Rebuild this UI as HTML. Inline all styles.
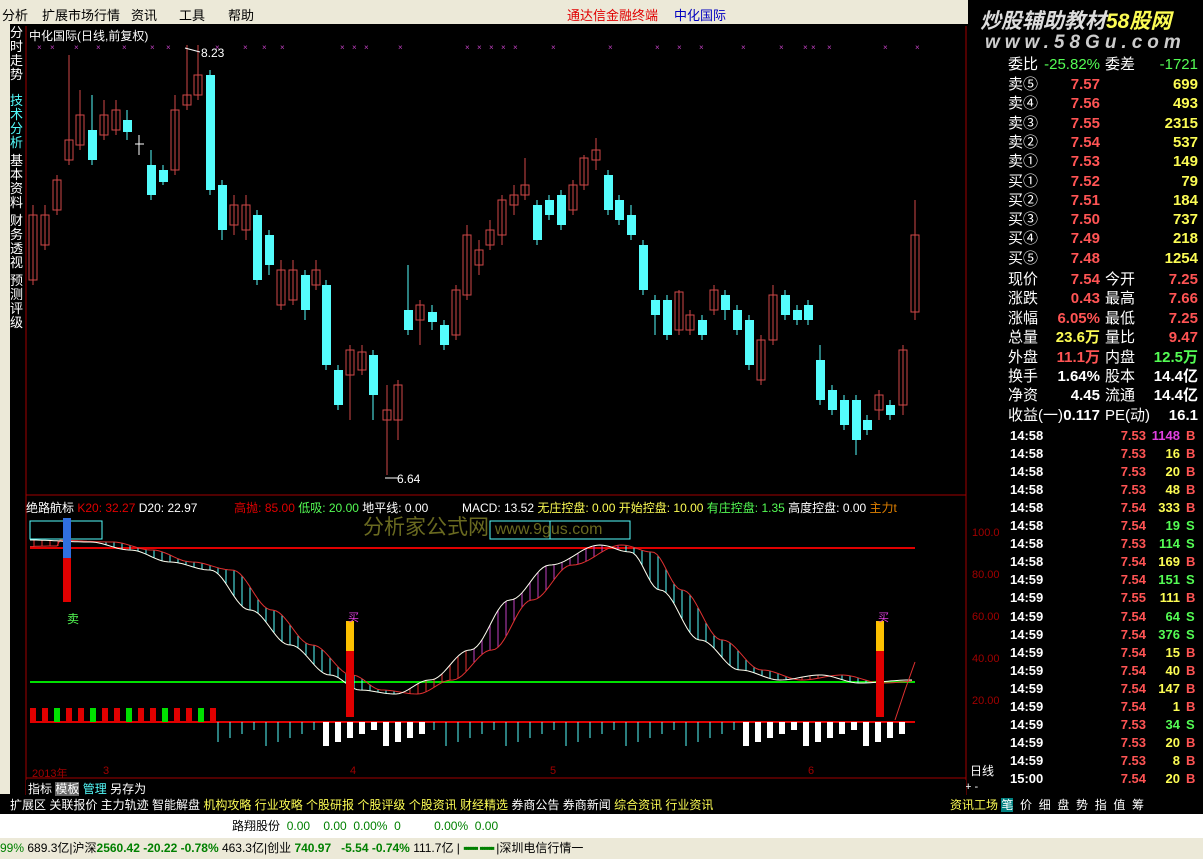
<!DOCTYPE html><html><head><meta charset="utf-8"><style>
*{margin:0;padding:0;box-sizing:border-box}
body{width:1203px;height:859px;overflow:hidden;background:#000;font-family:"Liberation Sans","Noto Sans CJK SC",sans-serif;font-size:12px;position:relative}
.a{position:absolute;white-space:nowrap}
#menu{left:0;top:0;width:1203px;height:24px;background:#ece9d8;color:#000;font-size:13px}
#menu span{position:absolute;top:5px}
.rp div{position:absolute;font-size:15px;white-space:nowrap;height:19px;line-height:19px}
.w{color:#fff}.r{color:#ff5454}.g{color:#54fc54}.y{color:#fcfc54}.m{color:#e040e0}
</style></head><body>
<div class="a" id="menu"><span style="left:2px">分析</span><span style="left:42px">扩展市场行情</span><span style="left:131px">资讯</span><span style="left:179px">工具</span><span style="left:228px">帮助</span><span style="left:567px;color:#e00000">通达信金融终端</span><span style="left:674px;color:#0000c0">中化国际</span></div>
<div class="a" style="left:0;top:24px;width:10px;height:770px;background:#ece9d8"></div>
<div class="a" style="left:10px;top:26px;width:16px;color:#fff;font-size:13px;line-height:14px;white-space:normal">分时走势</div>
<div class="a" style="left:10px;top:94px;width:16px;color:#54fcfc;font-size:13px;line-height:14px;white-space:normal">技术分析</div>
<div class="a" style="left:10px;top:154px;width:16px;color:#fff;font-size:13px;line-height:14px;white-space:normal">基本资料</div>
<div class="a" style="left:10px;top:214px;width:16px;color:#fff;font-size:13px;line-height:14px;white-space:normal">财务透视</div>
<div class="a" style="left:10px;top:274px;width:16px;color:#fff;font-size:13px;line-height:14px;white-space:normal">预测评级</div>
<div class="a" style="left:29px;top:27px;color:#fff;font-size:12px">中化国际(日线,前复权)</div>
<div class="a" style="left:201px;top:46px;color:#fff;font-size:12px">8.23</div>
<div class="a" style="left:397px;top:472px;color:#fff;font-size:12px">6.64</div>
<svg class="a" style="left:0;top:0" width="1203" height="859" id="sv"></svg>
<div class="a" style="left:26px;top:499px;font-size:12px"><span class="w">绝路航标</span> <span style="color:#e00000">K20: 32.27</span> <span class="w">D20: 22.97</span>&nbsp;&nbsp;&nbsp;&nbsp;&nbsp;&nbsp;&nbsp;&nbsp;&nbsp;&nbsp;&nbsp;<span style="color:#e00000">高抛: 85.00</span> <span class="g">低吸: 20.00</span> <span class="w">地平线: 0.00</span></div>
<div class="a" style="left:462px;top:499px;font-size:12px"><span class="w">MACD: 13.52</span> <span class="y">无庄控盘: 0.00</span> <span class="y">开始控盘: 10.00</span> <span class="g">有庄控盘: 1.35</span> <span class="w">高度控盘: 0.00</span> <span style="color:#e08000">主力t</span></div>
<div class="a" style="left:363px;top:511px;color:#6a6a20;font-size:21px">分析家公式网 <span style="font-size:16px">www.9gus.com</span></div>
<div class="a" style="left:67px;top:610px;color:#54fc54;font-size:12px">卖</div>
<div class="a" style="left:348px;top:609px;color:#e040e0;font-size:11px">买</div>
<div class="a" style="left:878px;top:609px;color:#e040e0;font-size:11px">买</div>
<div class="a" style="left:32px;top:765px;color:#a00000;font-size:11px">2013年</div>
<div class="a" style="left:103px;top:765px;color:#a00000;font-size:11px">3</div>
<div class="a" style="left:350px;top:765px;color:#a00000;font-size:11px">4</div>
<div class="a" style="left:550px;top:765px;color:#a00000;font-size:11px">5</div>
<div class="a" style="left:808px;top:765px;color:#a00000;font-size:11px">6</div>
<div class="a" style="left:972px;top:512px;color:#a00000;font-size:11px;line-height:42px">100.0<br>80.00<br>60.00<br>40.00<br>20.00</div>
<div class="a" style="left:970px;top:762px;color:#fff;font-size:12px">日线</div>
<div class="a" style="left:965px;top:781px;color:#fff;font-size:11px">+ -</div>
<div class="a" style="left:26px;top:780px;width:940px;height:16px;background:#000;color:#fff;font-size:12px"><span style="margin-left:2px">指标</span> <span style="background:#666">模板</span> <span style="color:#54fcfc">管理</span> 另存为</div>
<div class="a" style="left:10px;top:796px;width:968px;height:18px;background:#000;font-size:12px;line-height:18px"><span class="w">扩展区 关联报价 主力轨迹 智能解盘</span> <span class="y">机构攻略 行业攻略 个股研报 个股评级 个股资讯 财经精选</span> <span class="w">券商公告 券商新闻</span> <span class="y">综合资讯 行业资讯</span></div>
<div class="a" style="left:950px;top:796px;width:253px;height:18px;background:#000;font-size:12px;line-height:18px;color:#fff"><span class="y">资讯工场</span> <span style="background:#008080">笔</span>&nbsp; 价 &nbsp;细 &nbsp;盘 &nbsp;势 &nbsp;指 &nbsp;值 &nbsp;筹</div>
<div class="a" style="left:0;top:814px;width:1203px;height:24px;background:#fff;font-size:12px;line-height:24px"><span style="margin-left:232px">路翔股份</span>&nbsp;&nbsp;<span style="color:#008000">0.00&nbsp;&nbsp;&nbsp;&nbsp;0.00&nbsp;&nbsp;0.00%&nbsp;&nbsp;0&nbsp;&nbsp;&nbsp;&nbsp;&nbsp;&nbsp;&nbsp;&nbsp;&nbsp;&nbsp;0.00%&nbsp;&nbsp;0.00</span></div>
<div class="a" style="left:0;top:838px;width:1203px;height:21px;background:#ece9d8;font-size:12px;line-height:21px"><span style="color:#008000">99%</span> 689.3亿|沪深<b style="color:#008000">2560.42 -20.22 -0.78%</b> 463.3亿|创业 <b style="color:#008000">740.97 &nbsp;&nbsp;-5.54 -0.74%</b> 111.7亿 | <span style="color:#008000;letter-spacing:-2px">▪▪▪▪▪▪ &nbsp;▪▪▪▪▪▪</span> |深圳电信行情一</div>
<div class="a" style="left:968px;top:0;width:235px;height:58px;background:#000"></div>
<div class="a" style="left:980px;top:5px;color:#ddd;font-size:21px;font-style:italic;font-weight:bold">炒股辅助教材<span class="y">58股网</span></div>
<div class="a" style="left:985px;top:32px;color:#ccc;font-size:19px;font-style:italic;font-weight:bold;letter-spacing:5px">www.58Gu.com</div>
<div class="rp" id="rp"></div>
<script>
var s='',S=document.getElementById('sv');
function R(x,y,w,h,c,f){s+='<rect x="'+x+'" y="'+y+'" width="'+w+'" height="'+h+'" '+(f?'fill="'+c+'"':'fill="none" stroke="'+c+'"')+'/>';}
function L(a,b,c,d,col,w){s+='<line x1="'+a+'" y1="'+b+'" x2="'+c+'" y2="'+d+'" stroke="'+col+'" stroke-width="'+(w||1)+'"/>';}
L(26,26,26,795,'#a00000');L(966,26,966,795,'#a00000');L(26,495,966,495,'#a00000');L(26,778,966,778,'#a00000');
[37,50,74,96,122,150,166,215,243,262,280,340,352,364,398,465,477,489,501,513,551,608,655,677,699,741,779,803,811,827,883,915].forEach(function(x){s+='<text x="'+x+'" y="50" fill="#c040c0" font-size="8">×</text>';});
var C=[[33,215,280,205,285,'r'],[45,215,245,205,250,'r'],[57,180,210,175,215,'r'],[69,140,160,55,165,'r'],[80,115,145,90,150,'r'],[92,130,160,95,165,'c'],[104,115,135,100,140,'r'],[116,110,130,100,135,'r'],[127,120,132,110,140,'c'],[139,144,146,135,155,'w'],[151,165,195,150,200,'c'],[163,170,182,165,185,'c'],[175,110,170,95,175,'r'],[187,95,105,45,110,'r'],[198,75,95,45,100,'r'],[210,75,190,70,195,'c'],[222,185,230,180,240,'c'],[234,205,225,195,235,'r'],[246,205,230,195,240,'r'],[257,215,280,210,285,'c'],[269,235,265,230,275,'c'],[281,270,305,260,310,'r'],[293,270,300,260,305,'r'],[305,275,310,270,320,'c'],[316,270,285,260,290,'r'],[326,285,365,280,370,'c'],[338,370,405,365,410,'c'],[350,350,375,345,420,'r'],[362,352,370,345,375,'r'],[373,355,395,350,420,'c'],[387,410,420,385,475,'r'],[398,385,420,380,440,'r'],[408,310,330,265,335,'c'],[420,305,320,300,345,'r'],[432,312,322,305,330,'c'],[444,325,345,320,350,'c'],[456,290,335,285,340,'r'],[467,235,295,225,300,'r'],[479,250,265,240,275,'r'],[490,230,245,220,250,'r'],[502,200,235,195,245,'r'],[514,195,205,185,215,'r'],[525,185,195,158,200,'r'],[537,205,240,200,245,'c'],[549,200,215,195,220,'c'],[561,195,225,190,230,'c'],[573,185,210,180,215,'r'],[584,158,185,155,190,'r'],[596,150,160,138,170,'r'],[608,175,210,170,215,'c'],[619,200,220,195,225,'c'],[631,215,235,205,240,'c'],[643,245,290,240,295,'c'],[655,300,315,295,335,'c'],[667,300,335,295,340,'c'],[679,292,330,290,335,'r'],[690,315,330,310,335,'r'],[702,320,335,315,340,'c'],[714,290,310,285,315,'r'],[725,295,310,290,320,'c'],[737,310,330,305,335,'c'],[749,320,365,315,370,'c'],[761,340,380,335,385,'r'],[773,295,340,285,345,'r'],[785,295,315,290,320,'c'],[797,310,320,305,325,'c'],[808,305,320,300,325,'c'],[820,360,400,345,405,'c'],[832,390,410,385,415,'c'],[844,400,425,395,430,'c'],[856,400,440,395,455,'c'],[867,420,430,415,435,'c'],[879,395,410,390,420,'r'],[890,405,415,400,420,'c'],[903,350,405,345,415,'r'],[915,235,312,200,320,'r']];
C.forEach(function(c){var x=c[0],col=c[5]=='r'?'#d04848':(c[5]=='c'?'#54fcfc':'#fff');L(x,c[3],x,c[4],col);if(c[5]=='c')R(x-4,c[1],9,c[2]-c[1],col,1);else if(c[5]=='w')L(x-4,c[1],x+5,c[1],col);else R(x-4,c[1],8,c[2]-c[1],col,0);});
L(185,48,200,52,'#fff');L(385,478,398,478,'#fff');
L(30,548,915,548,'#e00000',2);L(30,682,915,682,'#00e000',2);L(30,722,915,722,'#e00000',2);
// smooth curves
function fw(x){var P=[[30,540],[90,542],[130,550],[170,562],[210,570],[250,610],[290,645],[330,675],[360,690],[395,694],[430,680],[470,650],[510,600],[550,565],[600,545],[630,552],[660,590],[700,640],[740,670],[780,680],[820,675],[860,683],[910,680]];for(var i=0;i<P.length-1;i++)if(x<=P[i+1][0]){var t=(x-P[i][0])/(P[i+1][0]-P[i][0]);t=(1-Math.cos(t*Math.PI))/2;return P[i][1]+t*(P[i+1][1]-P[i][1]);}return 680;}
function fr(x){return fw(x-22)+(x<60?6:0);}
var pw=[],pr=[];
for(var x=30;x<=912;x+=3){pw.push(x+','+fw(x).toFixed(1));pr.push(x+','+fr(Math.max(30,x)).toFixed(1));}
for(var x=34;x<=910;x+=8){var a=fw(x),b=fr(x);if(Math.abs(a-b)>2)L(x,a,x,b,(x>470&&x<620)?'#c040c0':(a<b?'#e03030':'#54fcfc'));}
s+='<polyline fill="none" stroke="#e03030" points="'+pr.join(' ')+'"/>';
s+='<polyline fill="none" stroke="#fffff0" points="'+pw.join(' ')+'"/>';
R(30,521,72,18,'#54fcfc',0);R(490,521,60,18,'#54fcfc',0);R(550,521,80,18,'#54fcfc',0);
R(63,518,8,40,'#3070e0',1);R(63,558,8,44,'#e00000',1);
R(346,621,8,30,'#fcc000',1);R(346,651,8,66,'#e00000',1);R(876,621,8,30,'#fcc000',1);R(876,651,8,66,'#e00000',1);
for(var x=30;x<215;x+=12){var h=8+((x*7)%12);R(x,722-h,6,h,((x/12)|0)%3==1?'#00e000':'#e00000',1);}
for(var x=215;x<910;x+=12){var h=5+((x*13)%20);if(x>320&&x<420||x>740&&x<910){R(x,722,6,h,'#fff',1);if(x%3==0)R(x,722-h*2,6,h*2,'#fcfc80',0);}else L(x+3,722,x+3,722+h,'#54fcfc');}
s+='<polyline fill="none" stroke="#e03030" points="895,720 905,690 915,662"/>';
S.innerHTML=s;
var rp=document.getElementById('rp'),h='';
function D(x,y,t,c,r){h+='<div class="'+c+'" style="'+(r?'right:'+(1203-x)+'px':'left:'+x+'px')+';top:'+y+'px">'+t+'</div>';}
D(1008,55,'委比','w');D(1100,55,'-25.82%','g',1);D(1105,55,'委差','w');D(1198,55,'-1721','g',1);
var rows=[['卖⑤','7.57','699'],['卖④','7.56','493'],['卖③','7.55','2315'],['卖②','7.54','537'],['卖①','7.53','149'],['买①','7.52','79'],['买②','7.51','184'],['买③','7.50','737'],['买④','7.49','218'],['买⑤','7.48','1254']];
rows.forEach(function(r,i){var y=75+i*19.3;D(1008,y,r[0],'w');D(1100,y,'<b>'+r[1]+'</b>','r',1);D(1198,y,'<b>'+r[2]+'</b>','y',1);});
var info=[['现价','7.54','r','今开','7.25','r'],['涨跌','0.43','r','最高','7.66','r'],['涨幅','6.05%','r','最低','7.25','r'],['总量','23.6万','y','量比','9.47','r'],['外盘','11.1万','r','内盘','12.5万','g'],['换手','1.64%','w','股本','14.4亿','w'],['净资','4.45','w','流通','14.4亿','w'],['收益(一)','0.117','w','PE(动)','16.1','w']];
info.forEach(function(r,i){var y=270+i*19.4;D(1008,y,r[0],'w');D(1100,y,'<b>'+r[1]+'</b>',r[2],1);D(1105,y,r[3],'w');D(1198,y,'<b>'+r[4]+'</b>',r[5],1);});
var tk=[['14:58','7.53','1148 B'],['14:58','7.53','16 B'],['14:58','7.53','20 B'],['14:58','7.53','48 B'],['14:58','7.54','333 B'],['14:58','7.54','19 S'],['14:58','7.53','114 S'],['14:58','7.54','169 B'],['14:59','7.54','151 S'],['14:59','7.55','111 B'],['14:59','7.54','64 S'],['14:59','7.54','376 S'],['14:59','7.54','15 B'],['14:59','7.54','40 B'],['14:59','7.54','147 B'],['14:59','7.54','1 B'],['14:59','7.53','34 S'],['14:59','7.53','20 B'],['14:59','7.53','8 B'],['15:00','7.54','20 B']];
tk.forEach(function(r,i){var y=426+i*18.05,c=i==0?'m':(r[2].slice(-1)=='B'?'y':'g');var q=r[2].split(' ');D(1010,y,'<b style="font-size:13px">'+r[0]+'</b>','w');D(1146,y,'<b style="font-size:13px">'+r[1]+'</b>','r',1);h+='<div style="right:'+(1203-1180)+'px;top:'+y+'px;font-size:13px" class="'+c+'"><b>'+q[0]+'</b></div><div style="left:1186px;top:'+y+'px;font-size:13px" class="'+(q[1]=='B'?'r':'g')+'"><b>'+q[1]+'</b></div>';});
rp.innerHTML=h;
</script>
</body></html>
